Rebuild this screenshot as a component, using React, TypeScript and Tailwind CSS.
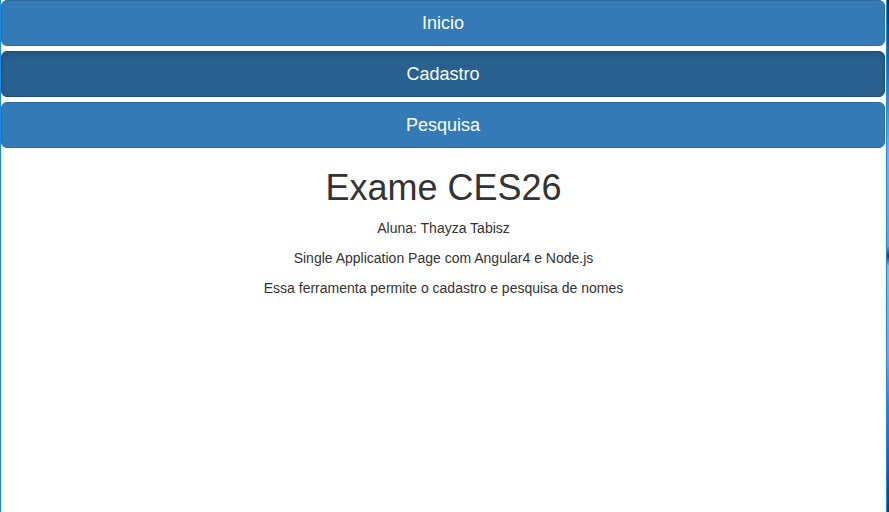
import React from "react";

function NavButton({ label, active }: { label: string; active?: boolean }) {
  return (
    <button
      className={
        active
          ? "block w-full h-[46px] rounded-[6px] border border-[#204d74] bg-[#286090] text-white text-[18px] leading-[24px] shadow-[inset_0_3px_5px_rgba(0,0,0,0.125)]"
          : "block w-full h-[46px] rounded-[6px] border border-[#2e6da4] bg-[#337ab7] text-white text-[18px] leading-[24px]"
      }
      style={{ fontFamily: '"Liberation Sans", Arial, sans-serif' }}
    >
      {label}
    </button>
  );
}

export default function App() {
  return (
    <div
      className="flex w-[889px] h-[512px] overflow-hidden bg-white text-[#333]"
      style={{ fontFamily: '"Liberation Sans", Arial, sans-serif' }}
    >
      <div className="w-[1px] h-full bg-[#1e88e5]" />
      <div className="w-[885px] h-full flex flex-col">
        <div className="flex flex-col gap-[5px] pr-[1px]">
          <NavButton label="Inicio" />
          <NavButton label="Cadastro" active />
          <NavButton label="Pesquisa" />
        </div>
        <div className="text-center">
          <h1 className="mt-[20px] mb-[10px] text-[36px] leading-[1.1] font-normal text-[#333]">
            Exame CES26
          </h1>
          <p className="mb-[10px] text-[14px] leading-[20px]">Aluna: Thayza Tabisz</p>
          <p className="mb-[10px] text-[14px] leading-[20px]">
            Single Application Page com Angular4 e Node.js
          </p>
          <p className="mb-[10px] text-[14px] leading-[20px]">
            Essa ferramenta permite o cadastro e pesquisa de nomes
          </p>
        </div>
      </div>
      <div className="w-[3px] h-full border-l border-[#1e88e5] bg-[linear-gradient(to_bottom,#0a2a55_0%,#1a5fa0_10%,#6fb6e0_30%,#5aa8d8_48%,#0d3a6e_50%,#7cc0e6_52%,#5fb0e0_70%,#1a88d8_80%,#0f70c0_88%,#0a3870_100%)]" />
    </div>
  );
}
